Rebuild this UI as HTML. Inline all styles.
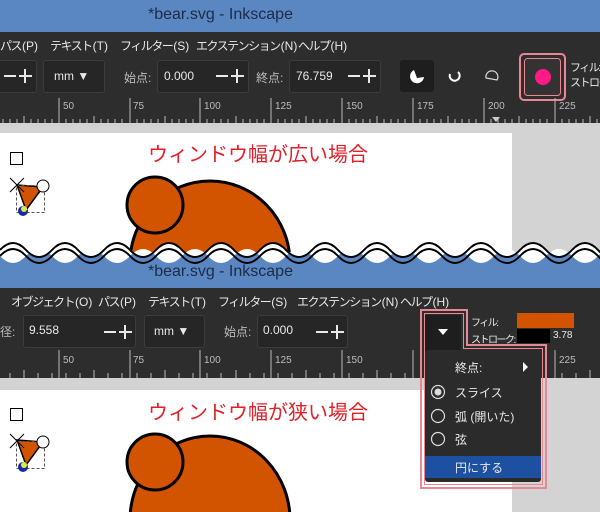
<!DOCTYPE html><html><head><meta charset="utf-8"><style>
*{margin:0;padding:0;box-sizing:border-box}
body{width:600px;height:512px;overflow:hidden;position:relative;background:#d3d3d3;font-family:"Liberation Sans","Noto Sans CJK JP",sans-serif;color:#e8e8e8;font-size:12px}
.a{position:absolute;white-space:nowrap}
.m{letter-spacing:-1.5px;margin-right:1px}
.title{background:#5a87c2}
.dark{background:#2d2d2d}
.box{position:absolute;background:#262626;border:1px solid #3c3c3c;border-radius:3px}
.red{color:#e0212a;font-size:20px}
</style></head><body>
<!-- window 1 -->
<div class="a title" style="left:0;top:0;width:600px;height:32px"></div>
<div class="a" style="left:148px;top:6px;font-size:16px;color:#1d2b47">*bear.svg - Inkscape</div>
<div class="a dark" style="left:0;top:32px;width:600px;height:91px"></div>
<div class="a" style="left:0;top:37px"><span class="m">パス</span>(P)</div>
<div class="a" style="left:50px;top:37px"><span class="m">テキスト</span>(T)</div>
<div class="a" style="left:120px;top:37px"><span class="m">フィルター</span>(S)</div>
<div class="a" style="left:196px;top:37px"><span class="m">エクステンション</span>(N)</div>
<div class="a" style="left:298px;top:37px"><span class="m">ヘルプ</span>(H)</div>
<div class="box" style="left:-5px;top:60px;width:42px;height:33px"></div>
<div class="box" style="left:43px;top:60px;width:62px;height:33px"></div>
<div class="a" style="left:54px;top:69px">mm ▼</div>
<div class="a" style="left:124px;top:69px;color:#bbb">始点:</div>
<div class="box" style="left:157px;top:60px;width:92px;height:33px"></div>
<div class="a" style="left:164px;top:69px">0.000</div>
<div class="a" style="left:256px;top:69px;color:#bbb">終点:</div>
<div class="box" style="left:289px;top:60px;width:92px;height:33px"></div>
<div class="a" style="left:296px;top:69px">76.759</div>
<div class="a" style="left:400px;top:60px;width:34px;height:32px;background:#1e1e1e;border-radius:3px"></div>
<svg class="a" style="left:0;top:0" width="600" height="130">
<g stroke="#e8e8e8" stroke-width="2"><path d="M4 76h12M19 76h13M25 69v14M216 76h12M231 76h13M237 69v14M348 76h12M363 76h13M369 69v14"/></g>
<path d="M414 70 A7 7 0 1 0 424 77 L417 78 Z" fill="#fff"/>
<path d="M458 72 A5 5 0 1 1 450 74" stroke="#fff" stroke-width="2" fill="none"/>
<path d="M486 78 A6 6 0 1 1 497 80 Z" stroke="#ddd" stroke-width="1.2" fill="none"/>
<rect x="520" y="54" width="45" height="46" rx="4" fill="none" stroke="#e88894" stroke-width="2"/>
<rect x="524.5" y="58.5" width="36" height="37" rx="3" fill="#333" stroke="#e88894" stroke-width="1"/>
<circle cx="543" cy="77" r="8" fill="#ff1a86"/>
</svg>
<div class="a m" style="left:570px;top:59px;font-size:11px">フィル:</div>
<div class="a m" style="left:570px;top:74px;font-size:11px">ストロー</div>
<!-- ruler 1 -->
<svg class="a" style="left:0;top:98px" width="600" height="25">
<g stroke="#bbb"><path d="M59 0V25M130 0V25M200 0V25M271 0V25M342 0V25M413 0V25M484 0V25M555 0V25"/>
<path d="M3 21V25M10 21V25M17 21V25M24 18V25M31 21V25M38 21V25M45 21V25M52 21V25M66 21V25M73 21V25M80 21V25M87 21V25M94 18V25M101 21V25M108 21V25M115 21V25M122 21V25M137 21V25M144 21V25M151 21V25M158 21V25M165 18V25M172 21V25M179 21V25M186 21V25M193 21V25M207 21V25M214 21V25M221 21V25M228 21V25M236 18V25M243 21V25M250 21V25M257 21V25M264 21V25M278 21V25M285 21V25M292 21V25M299 21V25M306 18V25M313 21V25M320 21V25M327 21V25M334 21V25M349 21V25M356 21V25M363 21V25M370 21V25M377 18V25M384 21V25M391 21V25M398 21V25M405 21V25M420 21V25M427 21V25M434 21V25M441 21V25M448 18V25M455 21V25M462 21V25M469 21V25M476 21V25M491 21V25M498 21V25M505 21V25M512 21V25M519 18V25M526 21V25M533 21V25M540 21V25M547 21V25M562 21V25M569 21V25M576 21V25M583 21V25M590 18V25M597 21V25"/></g>
<g fill="#bbb" font-size="10" font-family="Liberation Sans"><text x="63" y="11">50</text><text x="133" y="11">75</text><text x="204" y="11">100</text><text x="275" y="11">125</text><text x="346" y="11">150</text><text x="417" y="11">175</text><text x="488" y="11">200</text><text x="559" y="11">225</text></g>
<path d="M492 19h8l-4 5z" fill="#ccc"/>
</svg>
<div class="a" style="left:0;top:133px;width:512px;height:130px;background:#fff"></div>
<div class="a red" style="left:148px;top:138px">ウィンドウ幅が広い場合</div>
<svg class="a" style="left:0;top:125px" width="600" height="140">
<rect x="10.5" y="27.5" width="12" height="12" fill="none" stroke="#000"/>
<path d="M17 60 L43 62 L26 85 Z" fill="#d35400" stroke="#000" stroke-width="1.5"/>
<rect x="16.5" y="60.5" width="28" height="27" fill="none" stroke="#555" stroke-dasharray="3,2"/>
<path d="M10 53 L24 67 M24 53 L10 67" stroke="#000"/>
<circle cx="43" cy="61" r="6" fill="#fff" stroke="#000"/>
<circle cx="23" cy="86" r="5" fill="#1a2aa0"/><circle cx="24" cy="84" r="3" fill="#d9f040"/>
<ellipse cx="210" cy="138" rx="80" ry="82" fill="#d35400" stroke="#000" stroke-width="3"/>
<circle cx="155" cy="80" r="28" fill="#d35400" stroke="#000" stroke-width="3"/>
</svg>
<!-- wave -->
<svg class="a" style="left:0;top:232px" width="600" height="36">
<rect x="0" y="20" width="600" height="16" fill="#5a87c2"/>
<path d="M0 18 Q13 4 26 18 T52 18 T78 18 T104 18 T130 18 T156 18 T182 18 T208 18 T234 18 T260 18 T286 18 T312 18 T338 18 T364 18 T390 18 T416 18 T442 18 T468 18 T494 18 T520 18 T546 18 T572 18 T598 18 T624 18 V24 Q611 10 598 24 T572 24 T546 24 T520 24 T494 24 T468 24 T442 24 T416 24 T390 24 T364 24 T338 24 T312 24 T286 24 T260 24 T234 24 T208 24 T182 24 T156 24 T130 24 T104 24 T78 24 T52 24 T26 24 T0 24 Z" fill="#fff"/>
<path d="M0 18 Q13 4 26 18 T52 18 T78 18 T104 18 T130 18 T156 18 T182 18 T208 18 T234 18 T260 18 T286 18 T312 18 T338 18 T364 18 T390 18 T416 18 T442 18 T468 18 T494 18 T520 18 T546 18 T572 18 T598 18 T624 18" fill="none" stroke="#000" stroke-width="2"/>
<path d="M0 24 Q13 10 26 24 T52 24 T78 24 T104 24 T130 24 T156 24 T182 24 T208 24 T234 24 T260 24 T286 24 T312 24 T338 24 T364 24 T390 24 T416 24 T442 24 T468 24 T494 24 T520 24 T546 24 T572 24 T598 24 T624 24" fill="none" stroke="#000" stroke-width="2"/>
</svg>
<div class="a title" style="left:0;top:268px;width:600px;height:20px"></div>
<div class="a" style="left:148px;top:263px;font-size:16px;color:#1d2b47">*bear.svg - Inkscape</div>
<!-- window 2 -->
<div class="a dark" style="left:0;top:288px;width:600px;height:90px"></div>
<div class="a" style="left:11px;top:293px"><span class="m">オブジェクト</span>(O)</div>
<div class="a" style="left:98px;top:293px"><span class="m">パス</span>(P)</div>
<div class="a" style="left:148px;top:293px"><span class="m">テキスト</span>(T)</div>
<div class="a" style="left:218px;top:293px"><span class="m">フィルター</span>(S)</div>
<div class="a" style="left:297px;top:293px"><span class="m">エクステンション</span>(N)</div>
<div class="a" style="left:400px;top:293px"><span class="m">ヘルプ</span>(H)</div>
<div class="a" style="left:0;top:323px;color:#bbb">径:</div>
<div class="box" style="left:23px;top:315px;width:113px;height:33px"></div>
<div class="a" style="left:29px;top:323px">9.558</div>
<div class="box" style="left:144px;top:315px;width:61px;height:33px"></div>
<div class="a" style="left:154px;top:324px">mm ▼</div>
<div class="a" style="left:224px;top:323px;color:#bbb">始点:</div>
<div class="box" style="left:257px;top:315px;width:91px;height:33px"></div>
<div class="a" style="left:263px;top:323px">0.000</div>
<div class="a" style="left:425px;top:315px;width:36px;height:36px;background:#1e1e1e"></div>
<div class="a m" style="left:471px;top:314px;font-size:10px">フィル:</div>
<div class="a" style="left:517px;top:313px;width:57px;height:15px;background:#d35400"></div>
<div class="a m" style="left:471px;top:331px;font-size:10px">ストローク:</div>
<div class="a" style="left:517px;top:329px;width:33px;height:14px;background:#000"></div>
<div class="a" style="left:553px;top:330px;font-size:10px">3.78</div>
<svg class="a" style="left:0;top:300px" width="600" height="80">
<g stroke="#e8e8e8" stroke-width="2"><path d="M104 32h12M119 32h13M125 25v14M316 32h12M331 32h13M337 25v14"/></g>
</svg>
<svg class="a" style="left:0;top:350px" width="600" height="28">
<g stroke="#bbb"><path d="M59 0V28M130 0V28M200 0V28M271 0V28M342 0V28M413 0V28M484 0V28M555 0V28"/>
<path d="M10 23V28M24 20V28M38 23V28M52 23V28M66 23V28M80 23V28M94 20V28M108 23V28M122 23V28M137 23V28M151 23V28M165 20V28M179 23V28M193 23V28M207 23V28M221 23V28M236 20V28M250 23V28M264 23V28M278 23V28M292 23V28M306 20V28M320 23V28M334 23V28M349 23V28M363 23V28M377 20V28M391 23V28M405 23V28M562 23V28M576 23V28M590 20V28"/></g>
<g fill="#bbb" font-size="10" font-family="Liberation Sans"><text x="63" y="13">50</text><text x="133" y="13">75</text><text x="204" y="13">100</text><text x="275" y="13">125</text><text x="346" y="13">150</text><text x="559" y="13">225</text></g>
</svg>
<div class="a" style="left:0;top:390px;width:512px;height:122px;background:#fff"></div>
<div class="a red" style="left:148px;top:396px">ウィンドウ幅が狭い場合</div>
<svg class="a" style="left:0;top:380px" width="520" height="132">
<rect x="10.5" y="28.5" width="12" height="12" fill="none" stroke="#000"/>
<path d="M17 60 L43 62 L26 85 Z" fill="#d35400" stroke="#000" stroke-width="1.5"/>
<rect x="16.5" y="61.5" width="28" height="27" fill="none" stroke="#555" stroke-dasharray="3,2"/>
<path d="M10 54 L24 68 M24 54 L10 68" stroke="#000"/>
<circle cx="43" cy="62" r="6" fill="#fff" stroke="#000"/>
<circle cx="23" cy="87" r="5" fill="#1a2aa0"/><circle cx="24" cy="85" r="3" fill="#d9f040"/>
<ellipse cx="210" cy="140" rx="80" ry="84" fill="#d35400" stroke="#000" stroke-width="3"/>
<circle cx="155" cy="82" r="28" fill="#d35400" stroke="#000" stroke-width="3"/>
</svg>
<!-- popup -->
<div class="a" style="left:425px;top:350px;width:116px;height:132px;background:#2b2b2b;border-radius:3px"></div>
<div class="a" style="left:425px;top:456px;width:116px;height:22px;background:#1e50a2"></div>
<div class="a" style="left:455px;top:359px">終点:</div>
<div class="a" style="left:455px;top:384px">スライス</div>
<div class="a" style="left:455px;top:408px">弧 (開いた)</div>
<div class="a" style="left:455px;top:431px">弦</div>
<div class="a" style="left:455px;top:459px">円にする</div>
<svg class="a" style="left:0;top:0" width="600" height="512">
<path d="M421 310 H467 V345 H546 V488 H421 Z" fill="none" stroke="#e88894" stroke-width="2"/>
<path d="M424.5 313.5 H463.5 V348.5 H542.5 V484.5 H424.5 Z" fill="none" stroke="#e88894" stroke-width="1"/>
<path d="M438 329h10l-5 6z" fill="#fff"/>
<path d="M523 362l5 5-5 5z" fill="#fff"/>
<circle cx="438" cy="392" r="6.5" fill="none" stroke="#ddd" stroke-width="1.2"/><circle cx="438" cy="392" r="3.5" fill="#ddd"/>
<circle cx="438" cy="416" r="6.5" fill="none" stroke="#ddd" stroke-width="1.2"/>
<circle cx="438" cy="439" r="6.5" fill="none" stroke="#ddd" stroke-width="1.2"/>
</svg>
</body></html>
